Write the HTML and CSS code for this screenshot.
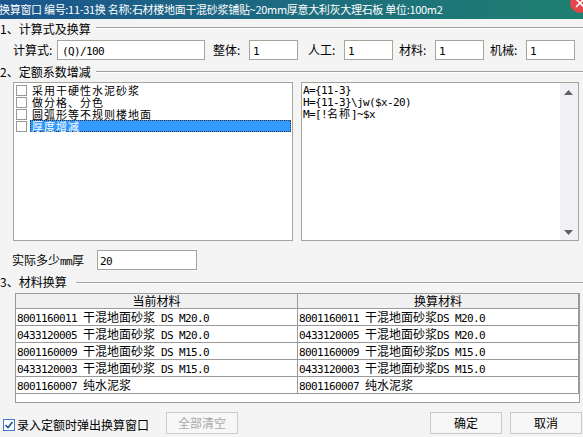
FILE: index.html
```html
<!DOCTYPE html>
<html lang="zh-CN">
<head>
<meta charset="utf-8">
<title>换算窗口</title>
<link rel="stylesheet" href="styles.css">
</head>
<body>
<div class="window">
  <div class="titlebar">
    <span class="title">换算窗口 编号:11-31换 名称:石材楼地面干混砂浆铺贴~20mm厚意大利灰大理石板 单位:100m2</span>
    <span class="close"><svg width="20" height="20" viewBox="0 0 20 20"><path d="M6 6 L14 14 M14 6 L6 14" stroke="#fff" stroke-width="1.6" fill="none"/></svg></span>
  </div>

  <div class="legend lg1"><span>1、计算式及换算</span><i></i></div>

  <div class="formula">
    <label class="lb lb-f">计算式:</label>
    <div class="input in-f"><span class="m">(Q)/100</span></div>
    <label class="lb lb-s g8">整体:</label>
    <div class="input in-s"><span class="m">1</span></div>
    <label class="lb lb-s g10">人工:</label>
    <div class="input in-s"><span class="m">1</span></div>
    <label class="lb lb-s g6">材料:</label>
    <div class="input in-s"><span class="m">1</span></div>
    <label class="lb lb-s g6">机械:</label>
    <div class="input in-s"><span class="m">1</span></div>
  </div>

  <div class="legend lg2"><span>2、定额系数增减</span><i></i></div>

  <div class="panes">
    <div class="listbox">
      <div class="item"><b class="cb"></b><span class="txt">采用干硬性水泥砂浆</span></div>
      <div class="item"><b class="cb"></b><span class="txt">做分格、分色</span></div>
      <div class="item"><b class="cb"></b><span class="txt">圆弧形等不规则楼地面</span></div>
      <div class="item"><b class="cb"></b><span class="txt sel">厚度增减</span></div>
    </div>
    <div class="memo">
      <div class="memo-text">
        <div><span class="m">A={11-3}</span></div>
        <div><span class="m">H={11-3}\jw($x-20)</span></div>
        <div><span class="m">M=[!</span><span class="cj">名称</span><span class="m">]~$x</span></div>
      </div>
      <div class="vscroll">
        <svg class="arr" width="9" height="5" viewBox="0 0 9 5"><path d="M0 5 L4.5 0 L9 5 Z" fill="#606060"/></svg>
        <svg class="arr" width="9" height="5" viewBox="0 0 9 5"><path d="M0 0 L9 0 L4.5 5 Z" fill="#606060"/></svg>
      </div>
    </div>
  </div>

  <div class="thick">
    <label class="lb lb-t">实际多少<span class="m">mm</span>厚</label>
    <div class="input in-t"><span class="m">20</span></div>
  </div>

  <div class="legend lg3"><span>3、材料换算</span><i></i></div>

  <div class="grid">
    <div class="grow head">
      <div class="cell">当前材料</div>
      <div class="cell">换算材料</div>
    </div>
    <div class="grow">
      <div class="cell"><span class="m">8001160011 </span>干混地面砂浆<span class="m"> DS M20.0</span></div>
      <div class="cell"><span class="m">8001160011 </span>干混地面砂浆<span class="m">DS M20.0</span></div>
    </div>
    <div class="grow">
      <div class="cell"><span class="m">0433120005 </span>干混地面砂浆<span class="m"> DS M20.0</span></div>
      <div class="cell"><span class="m">0433120005 </span>干混地面砂浆<span class="m">DS M20.0</span></div>
    </div>
    <div class="grow">
      <div class="cell"><span class="m">8001160009 </span>干混地面砂浆<span class="m"> DS M15.0</span></div>
      <div class="cell"><span class="m">8001160009 </span>干混地面砂浆<span class="m">DS M15.0</span></div>
    </div>
    <div class="grow">
      <div class="cell"><span class="m">0433120003 </span>干混地面砂浆<span class="m"> DS M15.0</span></div>
      <div class="cell"><span class="m">0433120003 </span>干混地面砂浆<span class="m">DS M15.0</span></div>
    </div>
    <div class="grow">
      <div class="cell"><span class="m">8001160007 </span>纯水泥浆</div>
      <div class="cell"><span class="m">8001160007 </span>纯水泥浆</div>
    </div>
  </div>

  <div class="footer">
    <div class="chkwrap">
      <svg class="chk" width="12" height="12" viewBox="0 0 12 12"><rect x="0.5" y="0.5" width="11" height="11" fill="#fff" stroke="#3d7bc7"/><path d="M2.5 6 L5 8.5 L9.5 3" stroke="#1b4f9a" stroke-width="1.6" fill="none"/></svg>
      <span class="chklabel">录入定额时弹出换算窗口</span>
    </div>
    <button class="btn disabled">全部清空</button>
    <button class="btn ok">确定</button>
    <button class="btn cancel">取消</button>
  </div>
</div>
</body>
</html>
```

FILE: styles.css
```css
* { box-sizing: border-box; }
html, body { margin: 0; padding: 0; }
body {
  width: 583px;
  height: 437px;
  overflow: hidden;
  background: #f4f4f4;
  font-family: "Noto Sans CJK SC", sans-serif;
  font-size: 12px;
  color: #000;
}
.window { width: 583px; height: 437px; overflow: hidden; }

.m {
  font-family: "DejaVu Sans Mono", monospace;
  font-size: 11px;
  letter-spacing: -0.62px;
}

/* title bar */
.titlebar {
  height: 19px;
  background: linear-gradient(to right, #1b568e, #1e8070);
  color: #fff;
  display: flex;
  align-items: flex-start;
  justify-content: space-between;
  overflow: hidden;
}
.title {
  white-space: nowrap;
  line-height: 18px;
  margin-left: -1px;
  font-size: 11px;
  letter-spacing: -0.3px;
}
.close {
  width: 20px;
  height: 20px;
  border-radius: 50%;
  background: #e4464b;
  margin-top: -7px;
  margin-right: -7px;
  flex: none;
  display: block;
}
.close svg { display: block; }

/* legends */
.legend {
  display: flex;
  height: 16px;
  line-height: 16px;
}
.legend span { white-space: nowrap; }
.legend i {
  flex: 1;
  align-self: flex-start;
  height: 2px;
  border-top: 1px solid #a0a0a0;
  border-bottom: 1px solid #fff;
}
.lg1 { margin-top: 2px; }
.lg1 span { padding-right: 5px; }
.lg1 i { margin-top: 6px; }
.lg2 { margin-top: 4px; }
.lg2 span { padding-right: 5px; }
.lg2 i { margin-top: 7px; }
.lg3 { margin-top: 4px; }
.lg3 span { padding-right: 9px; }
.lg3 i { margin-top: 8px; }

/* inputs */
.input {
  height: 20px;
  border: 1px solid #a5a59c;
  background: #fff;
  padding-left: 3px;
  line-height: 18px;
  white-space: nowrap;
  overflow: hidden;
}
.lb { line-height: 20px; white-space: nowrap; }

.formula {
  display: flex;
  height: 20px;
  margin-top: 3px;
  padding-left: 13px;
}
.lb-f { width: 44px; }
.in-f { width: 148px; padding-left: 4px; }
.lb-s { width: 36px; }
.in-s { width: 49px; }
.g8 { margin-left: 8px; }
.g10 { margin-left: 10px; }
.g6 { margin-left: 6px; }

/* panes */
.panes {
  display: flex;
  gap: 8px;
  margin-top: 2px;
  padding-left: 13px;
  height: 159px;
}
.listbox {
  width: 280px;
  border: 1px solid #a5a59c;
  background: #fff;
  padding-top: 1px;
}
.item {
  display: flex;
  height: 12px;
  line-height: 12px;
}
.cb {
  width: 11px;
  height: 11px;
  margin: 1px 0 0 2px;
  border: 1px solid #999;
  background: #fff;
  flex: none;
}
.txt {
  margin-left: 3px;
  padding-left: 2px;
  height: 12px;
  line-height: 12px;
  font-size: 11px;
  letter-spacing: 1px;
  white-space: nowrap;
}
.txt.sel {
  flex: 1;
  margin-right: 1px;
  background: #3399ff;
  color: #fff;
  border: 1px dotted #333;
  padding-left: 1px;
  line-height: 10px;
}

.memo {
  width: 278px;
  border: 1px solid #a5a59c;
  background: #fff;
  display: flex;
}
.memo-text {
  flex: 1;
  padding-left: 1px;
  line-height: 12px;
  white-space: nowrap;
}
.memo-text div { height: 12px; }
.cj { font-size: 11px; letter-spacing: 1px; }
.vscroll {
  width: 18px;
  background: #f1f1f5;
  display: flex;
  flex-direction: column;
  justify-content: space-between;
  padding: 7px 0 5px 4px;
}
.arr { display: block; }

/* thickness */
.thick {
  display: flex;
  height: 20px;
  margin-top: 9px;
  padding-left: 12px;
}
.lb-t { width: 85px; }
.in-t { width: 100px; padding-left: 2px; }

/* grid */
.grid {
  margin: 3px 0 0 15px;
  width: 565px;
  height: 110px;
  border: 1px solid #9a9a9a;
  background: #fff;
}
.grow {
  display: grid;
  grid-template-columns: 282px 281px;
  height: 17px;
}
.grow .cell {
  border-right: 1px solid #9a9a9a;
  border-bottom: 1px solid #9a9a9a;
  padding-left: 1px;
  line-height: 16px;
  white-space: nowrap;
  overflow: hidden;
}
.grow.head { height: 15px; }
.grow.head .cell {
  background: #f0f0f0;
  text-align: center;
  line-height: 14px;
  padding-left: 0;
  overflow: visible;
}

/* footer */
.footer {
  display: flex;
  align-items: center;
  height: 22px;
  margin-top: 9px;
  padding-left: 3px;
}
.chkwrap {
  display: flex;
  align-items: center;
  margin-top: 3px;
}
.chk { display: block; flex: none; }
.chklabel { margin-left: 2px; line-height: 14px; white-space: nowrap; }
.btn {
  width: 72px;
  height: 22px;
  border: 1px solid #c5cad2;
  background: #f7f7f7;
  font-family: "Noto Sans CJK SC", sans-serif;
  font-size: 12px;
  color: #000;
  padding: 0;
  line-height: 20px;
}
.btn.disabled { margin-left: 17px; color: #a8a8a8; border-color: #cccccc; }
.btn.ok { margin-left: auto; }
.btn.cancel { margin-left: 8px; margin-right: 1px; }
```
